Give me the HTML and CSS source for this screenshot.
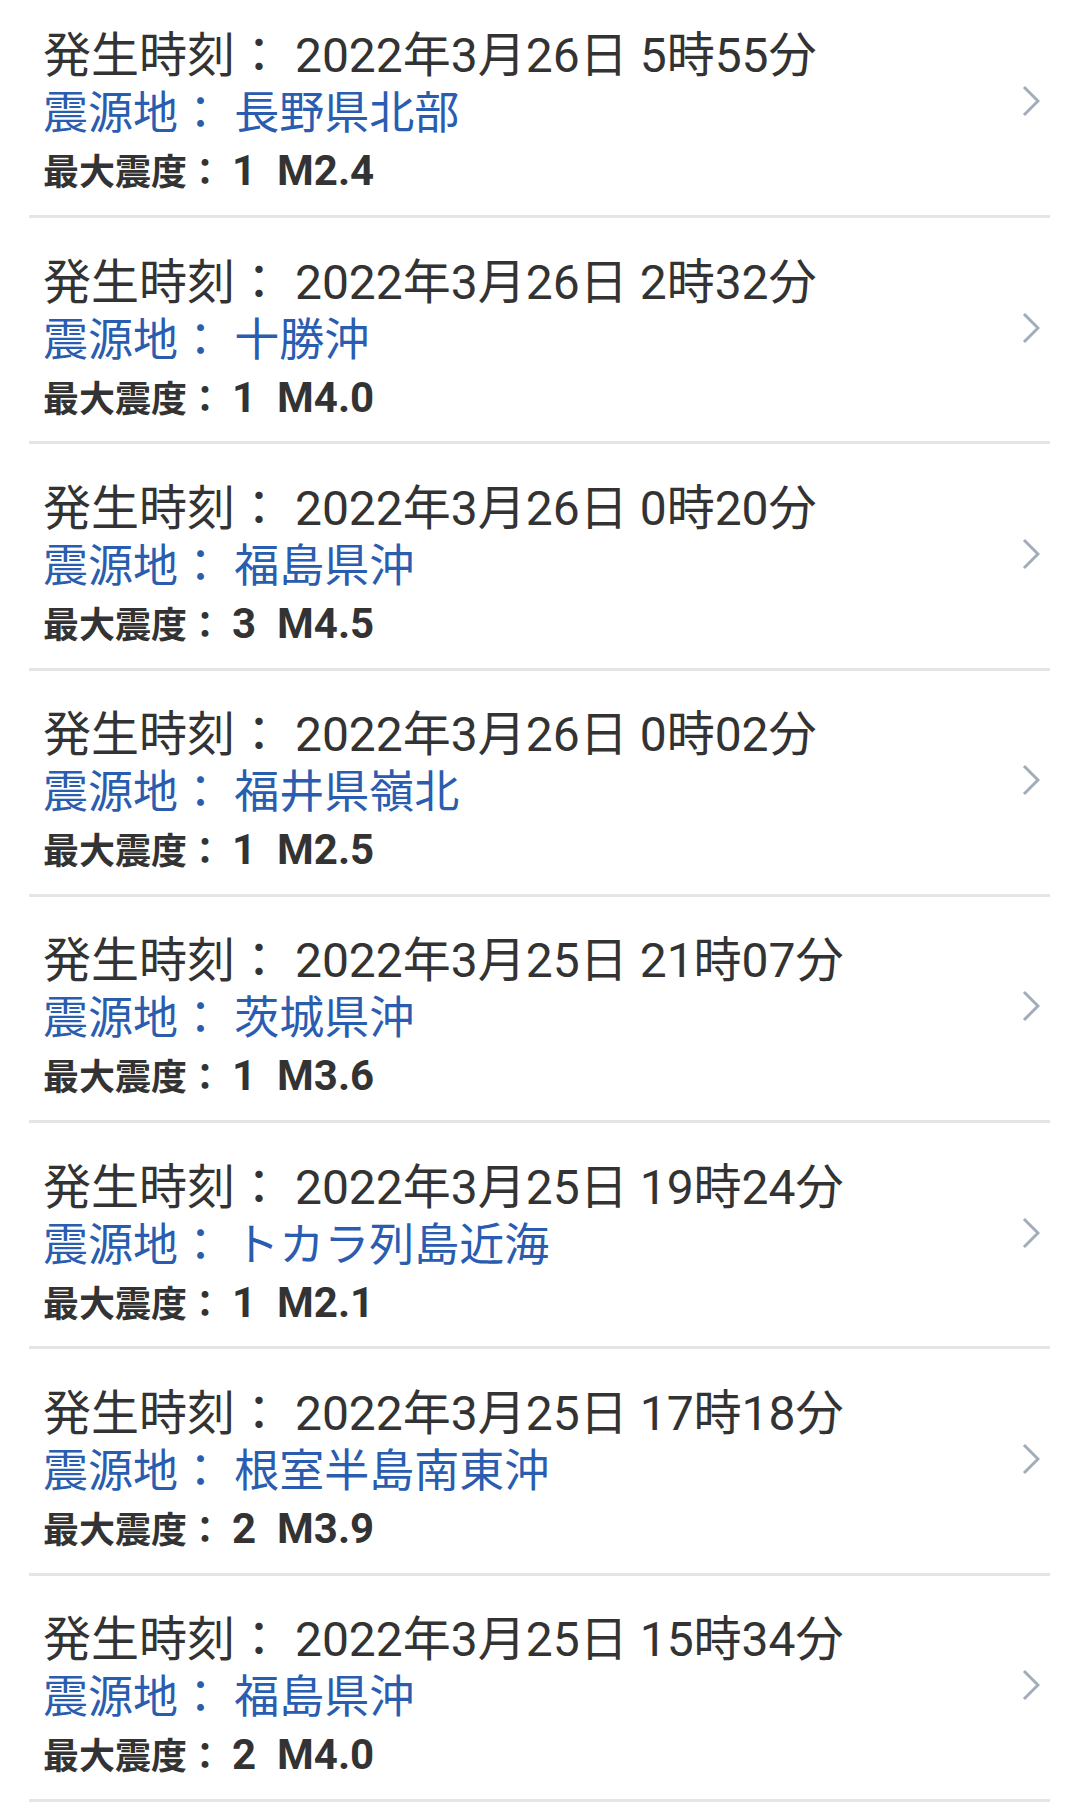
FILE: index.html
```
<!DOCTYPE html>
<html lang="ja">
<head>
  <meta charset="UTF-8">
  <title>地震情報</title>
  <link rel="stylesheet" href="styles.css">
</head>
<body>
  <ul class="lista-sismos">
    <li class="sismo">
      <div class="info">
        <p class="hora">発生時刻： 2022年3月26日 5時55分</p>
        <p class="lugar">震源地： 長野県北部</p>
        <p class="escala"><span class="etiqueta">最大震度： </span>1<span class="mag">M2.4</span></p>
      </div>
      <svg class="flecha" viewBox="0 0 18 32"><path d="M2 2 L16 16 L2 30"/></svg>
    </li>
    <li class="sismo">
      <div class="info">
        <p class="hora">発生時刻： 2022年3月26日 2時32分</p>
        <p class="lugar">震源地： 十勝沖</p>
        <p class="escala"><span class="etiqueta">最大震度： </span>1<span class="mag">M4.0</span></p>
      </div>
      <svg class="flecha" viewBox="0 0 18 32"><path d="M2 2 L16 16 L2 30"/></svg>
    </li>
    <li class="sismo">
      <div class="info">
        <p class="hora">発生時刻： 2022年3月26日 0時20分</p>
        <p class="lugar">震源地： 福島県沖</p>
        <p class="escala"><span class="etiqueta">最大震度： </span>3<span class="mag">M4.5</span></p>
      </div>
      <svg class="flecha" viewBox="0 0 18 32"><path d="M2 2 L16 16 L2 30"/></svg>
    </li>
    <li class="sismo">
      <div class="info">
        <p class="hora">発生時刻： 2022年3月26日 0時02分</p>
        <p class="lugar">震源地： 福井県嶺北</p>
        <p class="escala"><span class="etiqueta">最大震度： </span>1<span class="mag">M2.5</span></p>
      </div>
      <svg class="flecha" viewBox="0 0 18 32"><path d="M2 2 L16 16 L2 30"/></svg>
    </li>
    <li class="sismo">
      <div class="info">
        <p class="hora">発生時刻： 2022年3月25日 21時07分</p>
        <p class="lugar">震源地： 茨城県沖</p>
        <p class="escala"><span class="etiqueta">最大震度： </span>1<span class="mag">M3.6</span></p>
      </div>
      <svg class="flecha" viewBox="0 0 18 32"><path d="M2 2 L16 16 L2 30"/></svg>
    </li>
    <li class="sismo">
      <div class="info">
        <p class="hora">発生時刻： 2022年3月25日 19時24分</p>
        <p class="lugar">震源地： トカラ列島近海</p>
        <p class="escala"><span class="etiqueta">最大震度： </span>1<span class="mag">M2.1</span></p>
      </div>
      <svg class="flecha" viewBox="0 0 18 32"><path d="M2 2 L16 16 L2 30"/></svg>
    </li>
    <li class="sismo">
      <div class="info">
        <p class="hora">発生時刻： 2022年3月25日 17時18分</p>
        <p class="lugar">震源地： 根室半島南東沖</p>
        <p class="escala"><span class="etiqueta">最大震度： </span>2<span class="mag">M3.9</span></p>
      </div>
      <svg class="flecha" viewBox="0 0 18 32"><path d="M2 2 L16 16 L2 30"/></svg>
    </li>
    <li class="sismo">
      <div class="info">
        <p class="hora">発生時刻： 2022年3月25日 15時34分</p>
        <p class="lugar">震源地： 福島県沖</p>
        <p class="escala"><span class="etiqueta">最大震度： </span>2<span class="mag">M4.0</span></p>
      </div>
      <svg class="flecha" viewBox="0 0 18 32"><path d="M2 2 L16 16 L2 30"/></svg>
    </li>
  </ul>
</body>
</html>
```

FILE: styles.css
```
body {
  margin: 0;
  background: #ffffff;
  font-family: Roboto, "Noto Sans CJK JP", sans-serif;
  color: #333333;
}

.lista-sismos {
  list-style: none;
  margin: 0 19px 0 29px;
  padding: 0;
}

.sismo {
  display: flex;
  align-items: flex-start;
  box-sizing: border-box;
  height: 226.3px;
  padding: 35.6px 0 0 14px;
  border-bottom: 3px solid #e5e5e5;
}

.sismo:first-child {
  height: 218px;
  padding-top: 26.6px;
}

.info {
  flex: 1;
}

.info p {
  margin: 0;
  white-space: nowrap;
}

.hora {
  font-size: 48px;
  line-height: 58px;
}

.lugar {
  font-size: 45px;
  line-height: 58px;
  color: #2a5db0;
}

.escala {
  font-size: 42px;
  line-height: 56px;
  font-weight: bold;
}

.escala .etiqueta {
  font-size: 36px;
}

.escala .mag {
  margin-left: 21px;
}

.flecha {
  width: 18px;
  height: 32px;
  margin: 58px 10px 0 0;
  fill: none;
  stroke: #a3adb9;
  stroke-width: 3;
}
```
